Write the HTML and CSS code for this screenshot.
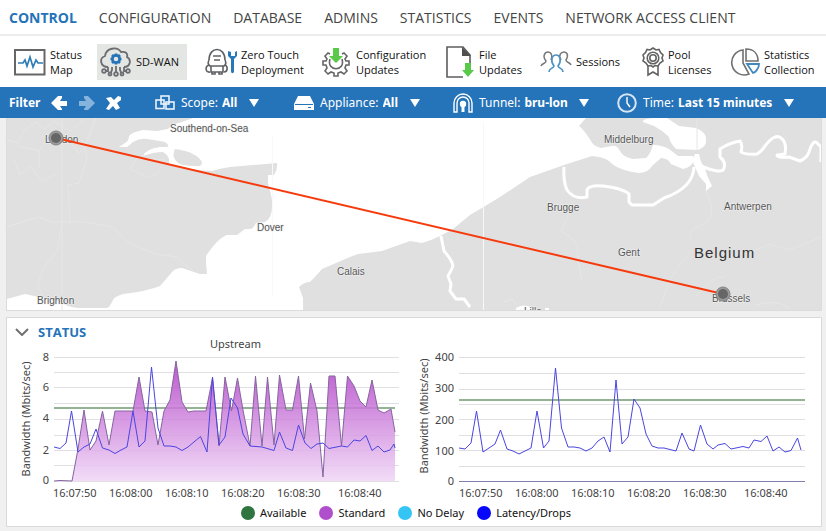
FILE: index.html
```html
<!DOCTYPE html>
<html lang="en">
<head>
<meta charset="utf-8">
<meta name="viewport" content="width=device-width, initial-scale=1">
<title>Control Center</title>
<link rel="stylesheet" href="styles.css">
</head>
<body>
<nav class="tabs">
  <a class="tab tab-active" href="#control">CONTROL</a>
  <a class="tab" href="#configuration">CONFIGURATION</a>
  <a class="tab" href="#database">DATABASE</a>
  <a class="tab" href="#admins">ADMINS</a>
  <a class="tab" href="#statistics">STATISTICS</a>
  <a class="tab" href="#events">EVENTS</a>
  <a class="tab" href="#nac">NETWORK ACCESS CLIENT</a>
</nav>

<div class="toolbar">
  <button class="tool" type="button">
    <svg class="tool-icon" width="32" height="32" viewBox="0 0 32 32"><rect x="1" y="4" width="29.500" height="24.500" fill="#fff" stroke="#666" stroke-width="2"/><path d="M4 17h5l2-3 2 6 3-9 3 10 3-7 2 3h5" fill="none" stroke="#2f7db5" stroke-width="1.700"/></svg>
    <span class="tool-name">Status<br>Map</span>
  </button>
  <button class="tool tool-active" type="button">
    <svg class="tool-icon" width="32" height="32" viewBox="0 0 32 32"><g fill="none" stroke="#6b6d70" stroke-width="1.800"><path d="M8 21C0 21-1 12 5 10C6 2 17 0 21 6C26 5 28 8 27 11C32 14 30 21 24 21"/><path d="M8 21v4H6M24 21v4h2M16 20v6"/><circle cx="4" cy="25" r="1.800"/><circle cx="16" cy="28" r="1.800"/><circle cx="28" cy="25" r="1.800"/><path d="M12 21v3l-1 2M20 21v3l1 2"/><circle cx="10" cy="28" r="1.500"/><circle cx="22" cy="28" r="1.500"/></g><circle cx="16" cy="13" r="3.600" fill="none" stroke="#2573b9" stroke-width="2.600"/><path d="M16 7.500v2M16 16.500v2M10.500 13h2M19.500 13h2M12 9l1.500 1.500M18.500 15.500L20 17M12 17l1.500-1.500M18.500 10.500L20 9" stroke="#2573b9" stroke-width="2.600"/></svg>
    <span class="tool-name">SD-WAN</span>
  </button>
  <button class="tool" type="button">
    <svg class="tool-icon" width="32" height="32" viewBox="0 0 32 32"><g fill="none" stroke="#5f6164" stroke-width="1.600"><path d="M4 14C4 0 20 0 20 14M8 10h8M9 14h6"/><path d="M4 14Q2 18 5 20H19Q22 18 20 14M6 20v6h12v-6"/><path d="M4 19C0 20 0 27 5 26M20 19C23 20 23 26 19 26M7 26v2h3v-2M14 26v2h3v-2"/></g><path d="M23 5v5l3 3v12c0 3 3 3 3 0V13l3-3V5l-2 1v4h-4V6z" fill="#2878b8"/></svg>
    <span class="tool-name">Zero Touch<br>Deployment</span>
  </button>
  <button class="tool" type="button">
    <svg class="tool-icon" width="30" height="32" viewBox="0 0 30 32"><path d="M8 8L6 7 3 10l2 3-1 2H1v4h3l1 3-2 3 3 3 3-2 3 1v3h4v-3l3-1 3 2 3-3-2-3 1-3h3v-4h-3l-1-2 2-3-3-3-2 1" fill="none" stroke="#666" stroke-width="1.600"/><path d="M8 13c-4 13 16 13 12 0" fill="none" stroke="#666" stroke-width="1.600"/><path d="M11 2h6v8h4l-7 7-7-7h4z" fill="#59c94a"/></svg>
    <span class="tool-name">Configuration<br>Updates</span>
  </button>
  <button class="tool" type="button">
    <svg class="tool-icon" width="30" height="34" viewBox="0 0 30 34"><path d="M18 32H2V2h16l7 8v9" fill="#fff" stroke="#5d5d5d" stroke-width="1.600"/><path d="M17 2l9 9h-9z" fill="#505050"/><path d="M20 18h6v7h3l-6 7-6-7h3z" fill="#59c94a"/></svg>
    <span class="tool-name">File<br>Updates</span>
  </button>
  <button class="tool" type="button">
    <svg class="tool-icon" width="32" height="24" viewBox="0 0 32 24"><g fill="none" stroke="#777" stroke-width="1.500"><path d="M1 16c1-3 5-2 5-5-4-5-1-9 2-9s5 3 3 8M31 15c-1-3-5-2-5-5 3-5 1-8-2-8s-6 3-3 8"/></g><path d="M9 22c0-4 4-3 5-6-4-5-2-11 2-11s6 6 2 11c1 3 5 2 5 6" fill="none" stroke="#4d92c4" stroke-width="1.600"/></svg>
    <span class="tool-name">Sessions</span>
  </button>
  <button class="tool" type="button">
    <svg class="tool-icon" width="22" height="32" viewBox="0 0 22 32"><g fill="none" stroke="#636363" stroke-width="1.600"><path d="M11 2l3 2 3-.500 1.500 3L21 9l-1 3 1 3-3 2-2 3-3-.500L11 21l-2-1.500-3 .500-2-3-3-2 1-3-1-3 2.500-2.500L5 3.500 8 4z"/><circle cx="11" cy="12" r="5.800"/><circle cx="11" cy="12" r="3.200"/><path d="M6 20v9l5-3 5 3v-9"/></g></svg>
    <span class="tool-name">Pool<br>Licenses</span>
  </button>
  <button class="tool" type="button">
    <svg class="tool-icon" width="30" height="30" viewBox="0 0 30 30"><g fill="none" stroke="#707070" stroke-width="1.600"><path d="M13 3a12.500 12.500 0 1 0 6 24l-6-11z"/><path d="M16 2v12h12C28 6 23 2 16 2z"/></g><path d="M17 17h12c0 4-3 8-6 9z" fill="none" stroke="#4088bd" stroke-width="1.800"/></svg>
    <span class="tool-name">Statistics<br>Collection</span>
  </button>
</div>

<div class="filterbar">
  <div class="history">
    <strong class="history-title">Filter</strong>
    <button class="iconbtn" type="button" aria-label="Back"><svg width="17" height="16" viewBox="0 0 17 16"><path d="M7 1h4v2L9 6h7v5H9l2 3v1H7L0 8z" fill="#fff"/></svg></button>
    <button class="iconbtn" type="button" aria-label="Forward" disabled><svg width="17" height="16" viewBox="0 0 17 16"><path d="M10 1H6v2l2 3H1v5h7l-2 3v1h4l7-7z" fill="#86b3db"/></svg></button>
    <button class="iconbtn" type="button" aria-label="Clear filter"><svg width="17" height="16" viewBox="0 0 17 16"><path d="M1 3l5-1 3 3 4-4 3 1v3l-4 3 3 5-4 2-3-4-4 4-3-1 4-6z" fill="#fff"/></svg></button>
  </div>
  <div class="filter">
    <svg class="filter-icon" width="20" height="16" viewBox="0 0 20 16"><g fill="none" stroke="#e9f2fa" stroke-width="1.600"><rect x="6" y="1" width="8" height="8"/><rect x="1" y="5" width="8" height="8.500"/><rect x="11" y="7" width="8" height="7"/></g></svg>
    <label for="scope">Scope:</label>
    <select id="scope"><option>All</option></select>
  </div>
  <div class="filter">
    <svg class="filter-icon" width="20" height="16" viewBox="0 0 20 16"><path d="M4 1h12l4 8v6H0V9z" fill="#fff"/><path d="M1 9.500h18" stroke="#2573b9"/><path d="M14 12.500h3" stroke="#2573b9"/></svg>
    <label for="appliance">Appliance:</label>
    <select id="appliance"><option>All</option></select>
  </div>
  <div class="filter">
    <svg class="filter-icon" width="20" height="20" viewBox="0 0 20 20"><path d="M1 19v-9a9 9 0 0 1 18 0v9h-3v-9a6 6 0 0 0-12 0v9z" fill="none" stroke="#fff" stroke-width="1.400"/><circle cx="10" cy="11" r="3.200" fill="#fff"/><path d="M10 12v7" stroke="#fff" stroke-width="3"/></svg>
    <label for="tunnel">Tunnel:</label>
    <select id="tunnel"><option>bru-lon</option></select>
  </div>
  <div class="filter">
    <svg class="filter-icon" width="20" height="20" viewBox="0 0 20 20"><circle cx="10" cy="10" r="8.800" fill="none" stroke="#d5e5f4" stroke-width="2"/><path d="M10 4v6l3 4" fill="none" stroke="#fff" stroke-width="1.400"/></svg>
    <label for="time">Time:</label>
    <select id="time"><option>Last 15 minutes</option></select>
  </div>
</div>

<main>
  <section class="map" aria-label="Tunnel map">
    <svg viewBox="7 118 814 192">
      <g class="land">
        <path d="M7 118H193L182 122Q172 124 168 129L157 131L143 130Q132 132 129 136Q129 141 125 143L119 147H127L133 142Q140 138 147 139L160 141Q169 142 168 147H160Q146 149 143 156Q154 152 163 152Q170 156 169 163Q178 169 212 171Q222 168 230 167L277 163Q278 168 274 175H268V184Q273 199 272 207Q272 218 265 222L256 223Q253 229 250 229H245L237 235H227Q218 238 206 256V262L207 274H200L182 268Q176 268 173 271L160 286Q148 291 123 294Q114 297 113 300Q110 307 107 308H78Q67 307 61 302L43 298L25 294L7 299Z"/>
        <path d="M175 149Q188 151 193 154Q201 158 202 163Q201 167 196 166Q180 166 177 162Q171 156 175 149Z"/>
        <path d="M303 310V298L299 287Q304 282 310 282Q316 276 322 269L350 257L358 254L382 251L410 241L422 243Q432 240 440 236L453 229L470 215L500 197L530 177L564 165L592 156Q604 157 609 161Q617 170 639 173Q648 173 652 166L661 158Q668 158 671 164L683 169Q692 167 694 160L693 156H678Q673 152 669 149Q662 145 653 145Q650 155 646 158L633 159Q623 157 620 151Q617 145 612 146L601 148Q593 146 591 141Q585 131 579 126L586 118H821V310Z"/>
      </g>
      <path class="water" d="M643 122Q642 119 653 118H667L679 126L696 128Q706 132 706 139Q707 147 698 150L676 149Q670 143 669 137Q662 130 654 126ZM695 154H699Q701 164 704 166Q707 176 711 184L712 186L706 191V184L699 176L692 160ZM516 308Q523 303 534 308V310H516ZM545 308h4v2h-4z"/>
      <g class="river">
        <path d="M564 167Q563 181 567 190Q574 200 587 197V190Q589 185 603 186Q622 188 629 194V202L632 205H653L664 198Q693 188 694 167"/>
        <path d="M701 166Q723 175 724 168Q726 162 720 157V149Q729 143 740 141Q743 145 741 152Q746 155 757 154Q762 151 765 146Q775 133 781 138Q787 142 785 154L777 155Q777 158 789 157L800 161Q807 158 809 152Q813 139 817 143L821 147V162"/>
        <path d="M441 236L444 251Q452 260 453 266Q451 271 448 276L451 284L450 291L456 299H464L470 307"/>
      </g>
      <g class="boundary">
        <path d="M7 227L38 217L52 222L85 222L113 227Q123 237 129 243L156 254L177 257L193 271M62 118V310M70 223L68 185L79 183L87 158L82 140M62 222L57 252L44 267L38 283L43 298M7 140L18 143L24 130L36 122L45 129L54 121L70 131L83 120M14 160L20 175L30 166L42 181L58 173M18 146L39 151L48 137L69 142L79 153L88 143M39 151V168M96 118L86 143M130 169L137 158L165 160Q155 182 145 176L130 169"/>
        <path d="M569 213L561 231Q581 242 577 253L582 282M705 190Q720 218 700 226Q687 230 691 238M697 118V150M692 250Q674 270 668 285L660 307M696 296Q714 274 724 277M738 253Q760 250 770 244L789 250Q806 244 821 237M756 305Q777 299 790 308M503 302L513 299L516 306"/>
      </g>
      <path class="seam" d="M272.500 135V297M483.500 122V310"/>
      <g class="place">
        <text x="170" y="132">Southend-on-Sea</text><text x="45" y="143">London</text>
        <text x="257" y="231">Dover</text><text x="37" y="304">Brighton</text>
        <text x="337" y="275">Calais</text><text x="547" y="211">Brugge</text>
        <text x="604" y="143">Middelburg</text><text x="724" y="210">Antwerpen</text>
        <text x="618" y="256">Gent</text><text x="712" y="302">Brussels</text>
        <text x="524" y="315">Lille</text>
      </g>
      <text class="country" x="694" y="258">Belgium</text>
      <path class="link" d="M56 138L723 294"/>
      <g class="site"><circle cx="56" cy="138" r="7"/><circle cx="723" cy="294" r="7"/></g>
      <g class="site-core"><circle cx="56" cy="138" r="5"/><circle cx="723" cy="294" r="5"/></g>
    </svg>
  </section>

  <section class="status">
    <h2 class="status-title">
      <svg width="14" height="8" viewBox="0 0 14 8"><path d="M1 1l6 6 6-6" fill="none" stroke="#707070" stroke-width="2"/></svg>
      STATUS
    </h2>
    <div class="charts">
      <svg class="chart" viewBox="7 341 407 157" role="img" aria-label="Upstream bandwidth">
        <defs><linearGradient id="fade" x1="0" y1="361" x2="0" y2="481" gradientUnits="userSpaceOnUse"><stop offset="0" stop-color="#b03cc6"/><stop offset="1" stop-color="#f0d6f6"/></linearGradient></defs>
        <path class="grid" d="M54 357.500H399M54 372.500H399M54 387.500H399M54 403.500H399M54 419.500H399M54 435.500H399M54 450.500H399M54 465.500H399M54 481.500H399"/>
        <path class="available" d="M54 408H395"/>
        <path class="area" fill="url(#fade)" d="M54 481L60 480.500L72 481L78 449L84 410L90 450L96 441L102.500 411L109 445L115 411L133 411L139 377L145 411L152 412L158 445L164 411L170 400L176 361L182 402L188 412L194 411L206 411L212.500 378L219 446L225 377L231.500 411L237.500 378L243 410L250 446L255.500 376L262 446L267.500 377L274 445L279.500 375L286 410H292.500L298.500 376L304.500 439L310.500 383L317 411L323 477L329 376L335 376L341.500 446L347.500 376L354 386L360 401L366 407L372 380L378 410L384 413L391 409L395 432V481Z"/>
        <path class="standard" d="M54 481L60 480.500L72 481L78 449L84 410L90 450L96 441L102.500 411L109 445L115 411L133 411L139 377L145 411L152 412L158 445L164 411L170 400L176 361L182 402L188 412L194 411L206 411L212.500 378L219 446L225 377L231.500 411L237.500 378L243 410L250 446L255.500 376L262 446L267.500 377L274 445L279.500 375L286 410H292.500L298.500 376L304.500 439L310.500 383L317 411L323 477L329 376L335 376L341.500 446L347.500 376L354 386L360 401L366 407L372 380L378 410L384 413L391 409L395 432"/>
        <path class="latency" d="M54 447L60 448.500L66 443L71.500 411L78 452L84 447L90 444L96 429L102.500 448L109 450L115 453.500L121 450L127 447L133 411L139 447L145 441L151.500 367L158 428L164 446L170 446L176 447L182 450.500L188 447L200.500 436.500L207 452L212.500 377L219 445L225 437L231 398L237.500 408L243 434L250 446L262 447L274 450.500L279.500 432L286 448L292.500 450.500L298.500 425L305 443L311 448.500L317 444L323 443L329 448.500L341.500 446L347.500 447L354 440L360 441L366 435.500L372 450.500L378 446L384 452L390 450L394 444L395 448"/>
        <text class="axis" x="210" y="348">Upstream</text>
        <g class="axis axis-y"><text x="49" y="361">8</text><text x="49" y="391">6</text><text x="49" y="422">4</text><text x="49" y="454">2</text><text x="49" y="484">0</text></g>
        <g class="axis"><text x="53" y="497">16:07:50</text><text x="109" y="497">16:08:00</text><text x="165" y="497">16:08:10</text><text x="221" y="497">16:08:20</text><text x="277" y="497">16:08:30</text><text x="338" y="497">16:08:40</text></g>
        <text class="axis axis-title" transform="translate(30 419) rotate(-90)">Bandwidth (Mbits/sec)</text>
      </svg>
      <svg class="chart" viewBox="414 341 407 157" role="img" aria-label="Downstream bandwidth">
        <path class="grid" d="M459 357.500H805M459 373.500H805M459 389.500H805M459 404.500H805M459 419.500H805M459 435.500H805M459 450.500H805M459 466.500H805"/>
        <path class="baseline" d="M459 481.500H805"/>
        <path class="available" d="M459 400H805"/>
        <path class="latency" d="M459 448L465 449L471 443L476.500 411L483 452L489 448L495 444L500.500 430L507 449L513 451L519 454L531 448L537 411L543.500 448L549 441L555.500 368L561.500 428L568 447L574 447L580 448L586 451L592 448L598 441L604 437L610 452L616 380L622 444L628 437L634 399L640 408L646 434L652 446L658 448L664 448L676 451L682 433L689 449L694 451L700.500 425L707 444L713 449L718 445L725 443.500L731 449L743 446.500L749 448L754 440L761 441.500L767 436L773 451L779 447L785 452L791 450.500L797.500 438L801 450"/>
        <g class="axis axis-y"><text x="454" y="361">400</text><text x="454" y="392">300</text><text x="454" y="424">200</text><text x="454" y="455">100</text><text x="454" y="485">0</text></g>
        <g class="axis"><text x="459" y="497">16:07:50</text><text x="515" y="497">16:08:00</text><text x="571" y="497">16:08:10</text><text x="627" y="497">16:08:20</text><text x="683" y="497">16:08:30</text><text x="744" y="497">16:08:40</text></g>
        <text class="axis axis-title" transform="translate(428 416) rotate(-90)">Bandwidth (Mbits/sec)</text>
      </svg>
    </div>
    <ul class="legend">
      <li class="key key-available">Available</li>
      <li class="key key-standard">Standard</li>
      <li class="key key-nodelay">No Delay</li>
      <li class="key key-latency">Latency/Drops</li>
    </ul>
  </section>
</main>
</body>
</html>
```

FILE: styles.css
```css
* { box-sizing: border-box; }

body {
  margin: 0;
  min-height: 100vh;
  background: #f0f0f0;
  color: #111;
  font-family: "Noto Sans", "Open Sans", sans-serif;
  font-size: 12px;
}

button, select {
  margin: 0;
  padding: 0;
  border: 0;
  background: none;
  color: inherit;
  font: inherit;
}

/* Top-level sections */
.tabs {
  display: flex;
  align-items: center;
  gap: 22px;
  height: 36px;
  padding: 0 9px;
  background: #fff;
  border-bottom: 2px solid #ececec;
}

.tab {
  color: #444;
  font-family: "Open Sans", sans-serif;
  font-size: 14px;
  text-decoration: none;
  white-space: nowrap;
}

.tab-active { color: #2573b9; font-weight: 700; }

/* Tools of the current section */
.toolbar {
  display: grid;
  grid-template-columns: 83fr 108fr 117fr 123fr 95fr 102fr 88fr 96fr;
  align-items: center;
  height: 51px;
  padding-left: 14px;
  background: #fff;
}

.tool {
  display: flex;
  align-items: center;
  gap: 4px;
  justify-self: start;
  height: 36px;
  font-family: "Open Sans", sans-serif;
  font-size: 11px;
  line-height: 15px;
  text-align: left;
  white-space: nowrap;
}

.tool-icon { flex: none; }

.tool-active {
  padding: 0 8px 0 3px;
  background: #e4e6e3;
}

/* Filter bar */
.filterbar {
  display: grid;
  grid-template-columns: 146fr 139fr 159fr 164fr 209fr;
  align-items: center;
  height: 31px;
  padding-left: 9px;
  background: #2573b9;
  color: #fff;
}

.history, .filter { display: flex; align-items: center; white-space: nowrap; }

.history { gap: 10px; }

.iconbtn { display: flex; }

.filter-icon { flex: none; margin-right: 6px; }

.filter label { margin-right: 4px; }

.filter select {
  appearance: none;
  font-weight: 700;
}

.filter::after {
  content: "";
  margin-left: 11px;
  border: 5px solid transparent;
  border-top: 8px solid #fff;
  border-bottom: 0;
}

main { padding: 0 4px 4px 6px; }

/* Map */
.map {
  background: #fff;
  border: 1px solid #dcdcdc;
  border-top: 0;
}

.map svg { display: block; width: 100%; }

.land { fill: #e0e0e0; }
.water { fill: #fff; }
.river { fill: none; stroke: #fff; stroke-width: 3; stroke-linejoin: round; }
.boundary { fill: none; stroke: #e6e6e6; stroke-width: 1; }
.seam { stroke: #f8f8f8; fill: none; }

.place {
  fill: #555;
  stroke: #f2f2f2;
  stroke-width: 1px;
  paint-order: stroke;
  font-family: "Liberation Sans", sans-serif;
  font-size: 10px;
}

.country {
  fill: #333;
  font-family: "Liberation Sans", sans-serif;
  font-size: 15px;
  letter-spacing: 1px;
}

.link { stroke: #f63a0c; stroke-width: 2; }
.site { fill: #9a9a9a; stroke: #858585; }
.site-core { fill: #666; }

/* Status panel */
.status {
  margin-top: 6px;
  padding-bottom: 5px;
  background: #fff;
  border: 1px solid #d9d9d9;
}

.status-title {
  display: flex;
  align-items: center;
  gap: 9px;
  height: 23px;
  margin: 0;
  padding: 5px 8px 0;
  color: #2573b9;
  font-family: "Open Sans", sans-serif;
  font-size: 13px;
}

.charts { display: grid; grid-template-columns: 1fr 1fr; }

.chart { display: block; width: 100%; overflow: visible; }

.grid { stroke: #dfdfe4; fill: none; }
.baseline { stroke: #8080ae; }
.available { stroke: #94b394; stroke-width: 2; }
.area { fill-opacity: .85; }
.standard { fill: none; stroke: #8564a0; stroke-width: 1; }
.latency { fill: none; stroke: #4a45e0; stroke-width: 1; }

.axis {
  fill: #444;
  font-family: "Noto Sans", sans-serif;
  font-size: 11px;
}

.axis-y { text-anchor: end; }
.axis-title { text-anchor: middle; }

.legend {
  display: flex;
  justify-content: center;
  gap: 13px;
  margin: 0;
  padding: 7px 16px 0 0;
  list-style: none;
  font-size: 11px;
  line-height: 16px;
}

.key { display: flex; align-items: center; gap: 5px; }

.key::before {
  content: "";
  width: 14px;
  height: 14px;
  border-radius: 50%;
  background: #307540;
}

.key-standard::before { background: #b04fcb; }
.key-nodelay::before { background: #35c5f4; }
.key-latency::before { background: #0707fb; }
```
